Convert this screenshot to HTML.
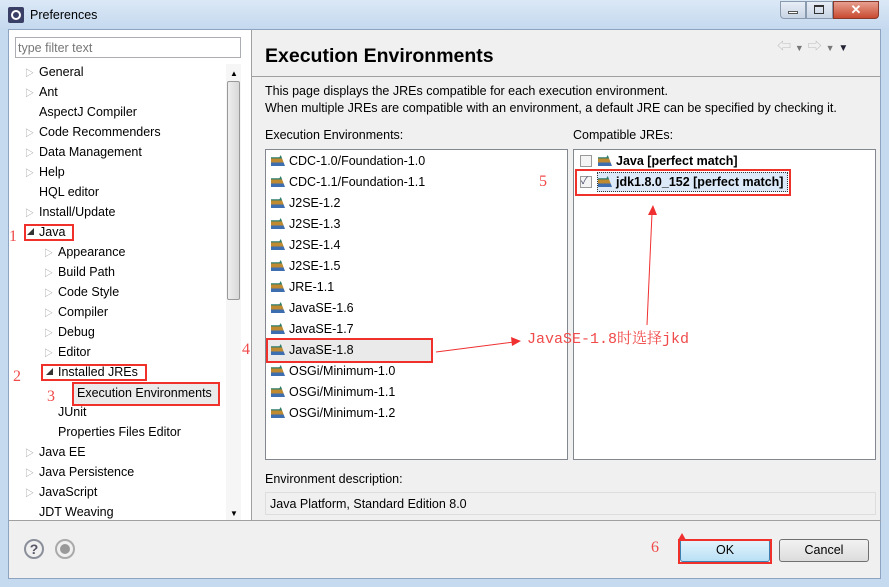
<!DOCTYPE html>
<html><head><meta charset="utf-8">
<style>
*{margin:0;padding:0;box-sizing:border-box}
body{width:889px;height:587px;overflow:hidden;background:#c5d9ef;font-family:"Liberation Sans","Noto Sans CJK SC",sans-serif;font-size:12.5px;color:#000;position:relative}
.a{position:absolute}
.t{position:absolute;white-space:nowrap;line-height:16px}
.tr{position:absolute;white-space:nowrap;line-height:16px;font-size:9px;color:#999}
.r{position:absolute;border:2px solid #f0302a}
.n{position:absolute;color:#f04a4a;font-family:"Liberation Serif",serif;font-size:16px;line-height:16px}
.ic{display:inline-block;width:14px;height:11px;vertical-align:-1px;margin-right:4px;background:linear-gradient(#2e7d6b 0 33%,#c08a30 33% 66%,#3d6fb0 66%);clip-path:polygon(0 20%,60% 20%,70% 0,100% 100%,0 100%)}
</style></head><body>
<div class="a" style="left:0;top:0;width:889px;height:30px;background:linear-gradient(#dbe8f6,#c4d8ee)"></div>
<div class="a" style="left:8px;top:7px;width:16px;height:16px;background:#3a3f66;border-radius:2px"></div>
<div class="a" style="left:11px;top:10px;width:10px;height:10px;border-radius:50%;border:2px solid #fff"></div>
<div class="t" style="left:30px;top:7px;font-size:12.5px">Preferences</div>
<div class="a" style="left:780px;top:1px;width:26px;height:18px;border:1px solid #8a9bb0;border-radius:0 0 0 4px;background:linear-gradient(#e8eef6,#c8d4e4)"></div>
<div class="a" style="left:788px;top:11px;width:10px;height:3px;background:#fff;border:1px solid #555"></div>
<div class="a" style="left:806px;top:1px;width:27px;height:18px;border:1px solid #8a9bb0;background:linear-gradient(#e8eef6,#c8d4e4)"></div>
<div class="a" style="left:814px;top:5px;width:10px;height:9px;border:1px solid #333;border-top-width:2px"></div>
<div class="a" style="left:833px;top:1px;width:46px;height:18px;border:1px solid #8a3a2a;border-radius:0 0 4px 0;background:linear-gradient(#e8a090,#c84a30);color:#fff;font-weight:bold;text-align:center;font-size:13px;line-height:16px">✕</div>
<div class="a" style="left:8px;top:29px;width:873px;height:550px;background:#f0f0f0;border:1px solid #8ea4c0"></div>
<div class="a" style="left:9px;top:30px;width:242px;height:490px;background:#fff"></div>
<div class="a" style="left:251px;top:30px;width:1px;height:490px;background:#a0a0a0"></div>
<div class="a" style="left:15px;top:37px;width:226px;height:21px;border:1px solid #abadb3;background:#fff"></div>
<div class="t" style="left:18px;top:40px;color:#777">type filter text</div>
<div class="a" style="left:226px;top:64px;width:15px;height:456px;background:#f6f6f6"></div>
<div class="a" style="left:227px;top:81px;width:13px;height:219px;border:1px solid #999;border-radius:2px;background:linear-gradient(90deg,#eee,#d8d8d8)"></div>
<div class="t" style="left:230px;top:66px;font-size:8px">▲</div>
<div class="t" style="left:230px;top:506px;font-size:8px">▼</div>
<div class="a" style="left:9px;top:520px;width:872px;height:1px;background:#a0a0a0"></div>
<div style="font-size:12.5px">
<div class="tr" style="left:25px;top:65px">▷</div><div class="t" style="left:39px;top:64px">General</div>
<div class="tr" style="left:25px;top:85px">▷</div><div class="t" style="left:39px;top:84px">Ant</div>
<div class="t" style="left:39px;top:104px">AspectJ Compiler</div>
<div class="tr" style="left:25px;top:125px">▷</div><div class="t" style="left:39px;top:124px">Code Recommenders</div>
<div class="tr" style="left:25px;top:145px">▷</div><div class="t" style="left:39px;top:144px">Data Management</div>
<div class="tr" style="left:25px;top:165px">▷</div><div class="t" style="left:39px;top:164px">Help</div>
<div class="t" style="left:39px;top:184px">HQL editor</div>
<div class="tr" style="left:25px;top:205px">▷</div><div class="t" style="left:39px;top:204px">Install/Update</div>
<div class="t" style="left:27px;top:225px;font-size:7px;color:#333">◢</div><div class="t" style="left:39px;top:224px">Java</div>
<div class="tr" style="left:44px;top:245px">▷</div><div class="t" style="left:58px;top:244px">Appearance</div>
<div class="tr" style="left:44px;top:265px">▷</div><div class="t" style="left:58px;top:264px">Build Path</div>
<div class="tr" style="left:44px;top:285px">▷</div><div class="t" style="left:58px;top:284px">Code Style</div>
<div class="tr" style="left:44px;top:305px">▷</div><div class="t" style="left:58px;top:304px">Compiler</div>
<div class="tr" style="left:44px;top:325px">▷</div><div class="t" style="left:58px;top:324px">Debug</div>
<div class="tr" style="left:44px;top:345px">▷</div><div class="t" style="left:58px;top:344px">Editor</div>
<div class="t" style="left:46px;top:365px;font-size:7px;color:#333">◢</div><div class="t" style="left:58px;top:364px">Installed JREs</div>
<div class="a" style="left:74px;top:384px;width:144px;height:20px;background:#eaeaea"></div>
<div class="t" style="left:77px;top:385px">Execution Environments</div>
<div class="t" style="left:58px;top:404px">JUnit</div>
<div class="t" style="left:58px;top:424px">Properties Files Editor</div>
<div class="tr" style="left:25px;top:445px">▷</div><div class="t" style="left:39px;top:444px">Java EE</div>
<div class="tr" style="left:25px;top:465px">▷</div><div class="t" style="left:39px;top:464px">Java Persistence</div>
<div class="tr" style="left:25px;top:485px">▷</div><div class="t" style="left:39px;top:484px">JavaScript</div>
<div class="t" style="left:39px;top:504px">JDT Weaving</div>
</div>
<div class="t" style="left:265px;top:45px;font-size:19.5px;font-weight:bold;line-height:22px">Execution Environments</div>
<div class="t" style="left:777px;top:38px;color:#bbb;font-size:14px">⇦ <span style="font-size:9px;color:#777">▼</span> ⇨ <span style="font-size:9px;color:#777">▼</span> <span style="font-size:10px;color:#223">▼</span></div>
<div class="a" style="left:252px;top:76px;width:629px;height:1px;background:#a0a0a0"></div>
<div class="t" style="left:265px;top:83px">This page displays the JREs compatible for each execution environment.</div>
<div class="t" style="left:265px;top:100px">When multiple JREs are compatible with an environment, a default JRE can be specified by checking it.</div>
<div class="t" style="left:265px;top:127px">Execution Environments:</div>
<div class="t" style="left:573px;top:127px">Compatible JREs:</div>
<div class="a" style="left:265px;top:149px;width:303px;height:311px;background:#fff;border:1px solid #828790"></div>
<div class="a" style="left:573px;top:149px;width:303px;height:311px;background:#fff;border:1px solid #828790"></div>
<div>
<div class="t" style="left:271px;top:153px"><i class="ic"></i>CDC-1.0/Foundation-1.0</div>
<div class="t" style="left:271px;top:174px"><i class="ic"></i>CDC-1.1/Foundation-1.1</div>
<div class="t" style="left:271px;top:195px"><i class="ic"></i>J2SE-1.2</div>
<div class="t" style="left:271px;top:216px"><i class="ic"></i>J2SE-1.3</div>
<div class="t" style="left:271px;top:237px"><i class="ic"></i>J2SE-1.4</div>
<div class="t" style="left:271px;top:258px"><i class="ic"></i>J2SE-1.5</div>
<div class="t" style="left:271px;top:279px"><i class="ic"></i>JRE-1.1</div>
<div class="t" style="left:271px;top:300px"><i class="ic"></i>JavaSE-1.6</div>
<div class="t" style="left:271px;top:321px"><i class="ic"></i>JavaSE-1.7</div>
<div class="a" style="left:268px;top:340px;width:163px;height:21px;background:#eaeaea"></div>
<div class="t" style="left:271px;top:342px"><i class="ic"></i>JavaSE-1.8</div>
<div class="t" style="left:271px;top:363px"><i class="ic"></i>OSGi/Minimum-1.0</div>
<div class="t" style="left:271px;top:384px"><i class="ic"></i>OSGi/Minimum-1.1</div>
<div class="t" style="left:271px;top:405px"><i class="ic"></i>OSGi/Minimum-1.2</div>
</div>
<div class="a" style="left:580px;top:155px;width:12px;height:12px;border:1px solid #999;background:#f4f4f4"></div>
<div class="t" style="left:598px;top:153px;font-weight:bold"><i class="ic"></i>Java [perfect match]</div>
<div class="a" style="left:580px;top:176px;width:12px;height:12px;border:1px solid #999;background:#f4f4f4;font-size:10px;line-height:10px;color:#446">✓</div>
<div class="a" style="left:597px;top:172px;width:191px;height:20px;background:#dce9f8;border:1px dotted #333"></div>
<div class="t" style="left:598px;top:174px;font-weight:bold"><i class="ic"></i>jdk1.8.0_152 [perfect match]</div>
<div class="t" style="left:265px;top:471px">Environment description:</div>
<div class="a" style="left:265px;top:492px;width:611px;height:23px;border:1px solid #ddd;background:#f0f0f0"></div>
<div class="t" style="left:270px;top:496px">Java Platform, Standard Edition 8.0</div>
<div class="a" style="left:24px;top:539px;width:20px;height:20px;border:2px solid #8a8f9a;border-radius:50%;text-align:center;font-weight:bold;color:#556;font-size:14px;line-height:16px">?</div>
<div class="a" style="left:55px;top:539px;width:20px;height:20px;border:2px solid #aaa;border-radius:50%"></div>
<div class="a" style="left:60px;top:544px;width:10px;height:10px;border-radius:50%;background:#999"></div>
<div class="a" style="left:680px;top:539px;width:90px;height:23px;border:1px solid #3c7fb1;border-radius:3px;background:linear-gradient(#e5f4fc,#b9e0f5);text-align:center;line-height:21px">OK</div>
<div class="a" style="left:779px;top:539px;width:90px;height:23px;border:1px solid #707070;border-radius:3px;background:linear-gradient(#f2f2f2,#dcdcdc);text-align:center;line-height:21px">Cancel</div>
<div class="r" style="left:24px;top:224px;width:50px;height:17px"></div>
<div class="r" style="left:41px;top:364px;width:106px;height:17px"></div>
<div class="r" style="left:72px;top:382px;width:148px;height:24px"></div>
<div class="r" style="left:266px;top:338px;width:167px;height:25px"></div>
<div class="r" style="left:575px;top:169px;width:216px;height:27px"></div>
<div class="r" style="left:678px;top:539px;width:94px;height:25px"></div>
<div class="n" style="left:9px;top:229px">1</div>
<div class="n" style="left:13px;top:369px">2</div>
<div class="n" style="left:47px;top:389px">3</div>
<div class="n" style="left:242px;top:342px">4</div>
<div class="n" style="left:539px;top:174px">5</div>
<div class="n" style="left:651px;top:540px">6</div>
<div class="t" style="left:527px;top:331px;color:#f04a4a;font-family:'Liberation Mono','Noto Serif CJK SC',monospace;font-size:15px;line-height:18px">JavaSE-1.8时选择jkd</div>
<svg class="a" style="left:0;top:0" width="889" height="587">
<line x1="436" y1="352" x2="514" y2="342" stroke="#f03030" stroke-width="1"/>
<polygon points="521,341 511,337 512,346" fill="#f03030"/>
<line x1="647" y1="325" x2="652" y2="213" stroke="#f03030" stroke-width="1"/>
<polygon points="653,205 648,215 657,215" fill="#f03030"/>
<polygon points="682,533 678,540 686,540" fill="#f03030"/>
</svg>
</body></html>
